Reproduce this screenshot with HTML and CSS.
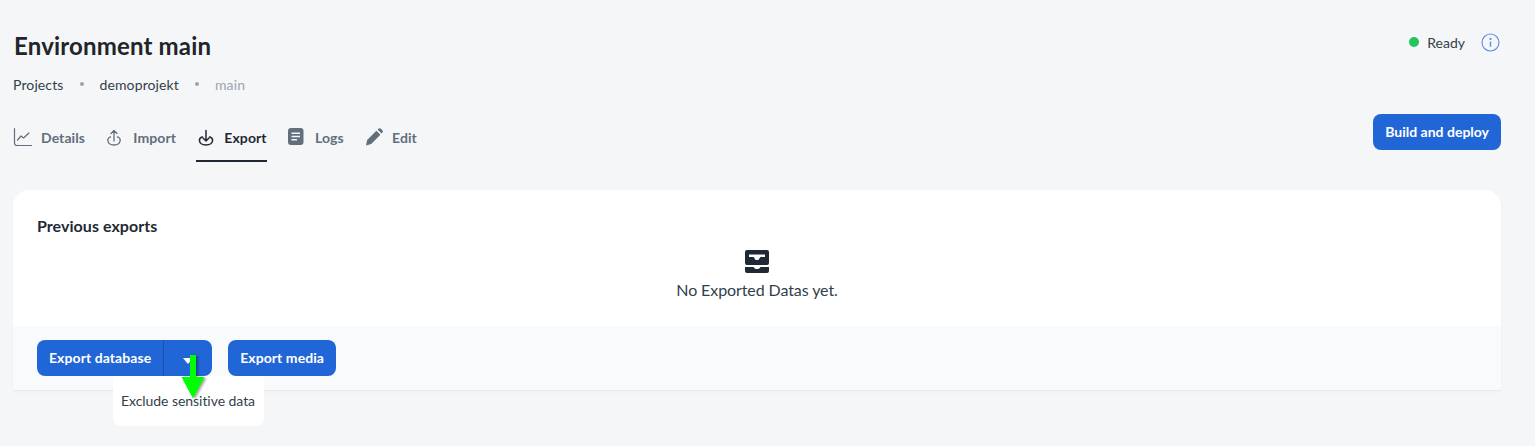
FILE: index.html
```html
<!DOCTYPE html>
<html lang="en">
<head>
  <meta charset="UTF-8">
  <title>Environment main</title>
  <link rel="stylesheet" href="styles.css">
</head>
<body>
  <div class="page-header">
    <div class="header-left">
      <h1>Environment main</h1>
      <div class="breadcrumbs">
        <a href="#">Projects</a>
        <span class="dot"></span>
        <a href="#">demoprojekt</a>
        <span class="dot"></span>
        <span class="current">main</span>
      </div>
      <nav class="tabs">
        <a href="#" class="tab">
          <svg class="tab-icon" viewBox="0 0 20 20" fill="none" stroke="currentColor" stroke-width="1.2" stroke-linecap="round" stroke-linejoin="round"><path d="M1.5 1.5V16Q1.5 18.5 4 18.5H18.5"/><path d="M4.5 13L8 9L10.5 11L16 6"/></svg>
          Details
        </a>
        <a href="#" class="tab">
          <svg class="tab-icon" viewBox="0 0 20 20" fill="none" stroke="currentColor" stroke-width="1.3" stroke-linecap="round" stroke-linejoin="round"><path d="M5.5 10H5Q2.6 11 2.8 13.5Q3.4 18 9 18Q14.6 18 15.2 13.5Q15.4 11 13 10H12.5"/><path d="M9 14V3.5M6 6.5L9 3.5L12 6.5"/></svg>
          Import
        </a>
        <a href="#" class="tab active">
          <svg class="tab-icon" viewBox="0 0 20 20" fill="none" stroke="currentColor" stroke-width="1.5" stroke-linecap="round" stroke-linejoin="round"><path d="M6.5 10H6Q3.3 11 3.4 13.5Q4 18 10 18Q16 18 16.6 13.5Q16.7 11 14 10H13.5"/><path d="M10 3.5V14M7 11L10 14L13 11"/></svg>
          Export
        </a>
        <a href="#" class="tab">
          <svg class="tab-icon" viewBox="0 0 20 20"><path fill="currentColor" fill-rule="evenodd" d="M4 1H13.5Q16.5 1 16.5 4V15Q16.5 18 13.5 18H4Q1 18 1 15V4Q1 1 4 1ZM4.5 5.5V7H13V5.5ZM4.5 8.8V10.3H13V8.8ZM4.5 12.1V13.6H10V12.1Z"/></svg>
          Logs
        </a>
        <a href="#" class="tab">
          <svg class="tab-icon" viewBox="0 0 20 20"><path fill="currentColor" d="M2 18.5L3.2 13L12.4 3.8L16.4 7.8L7.2 17ZM13.6 2.6L14.8 1.5Q15.7 .8 16.6 1.5L18.6 3.5Q19.3 4.4 18.6 5.3L17.5 6.6Z"/></svg>
          Edit
        </a>
      </nav>
    </div>
    <div class="header-right">
      <div class="status">
        <span class="status-dot"></span>
        <span>Ready</span>
        <svg class="info-icon" viewBox="0 0 20 20" fill="none" stroke="currentColor" stroke-width="1.2"><circle cx="10" cy="10" r="8.9"/><path d="M10 9V14.5" stroke-width="1.5"/><circle cx="10" cy="6.2" r=".6" fill="currentColor"/></svg>
      </div>
      <button class="btn btn-deploy">Build and deploy</button>
    </div>
  </div>

  <div class="card">
    <div class="card-body">
      <h2>Previous exports</h2>
      <div class="empty">
        <svg class="empty-icon" viewBox="0 0 24 24"><path fill="currentColor" fill-rule="evenodd" d="M2 0H22Q24 0 24 2V13Q24 15 22 15H2Q0 15 0 13V2Q0 0 2 0ZM4 4.5V7H8Q9 7 9.4 8L9.8 9Q10.2 10 11 10H13Q13.8 10 14.2 9L14.6 8Q15 7 16 7H20V4.5Z"/><path fill="currentColor" d="M0 17H8Q9 17 9.4 18Q9.8 19 11 19H13Q14.2 19 14.6 18Q15 17 16 17H24V21Q24 23 22 23H2Q0 23 0 21Z"/></svg>
        <p>No Exported Datas yet.</p>
      </div>
    </div>
    <div class="card-footer">
      <div class="btn-group">
        <button class="btn btn-main">Export database</button>
        <button class="btn btn-caret"><span class="caret"></span></button>
        <div class="dropdown">Exclude sensitive data</div>
        <svg class="arrow" viewBox="0 0 24 44"><path fill="#00ff00" d="M9 0H15V22H23.5L12 43.5L.5 22H9Z"/></svg>
      </div>
      <button class="btn">Export media</button>
    </div>
  </div>
</body>
</html>
```

FILE: styles.css
```css
* {
  box-sizing: border-box;
}
body {
  margin: 0;
  height: 446px;
  overflow: hidden;
  padding: 0 34px 0 13px;
  background-color: #f5f6f8;
  font-family: Lato, "Open Sans", sans-serif;
  color: #1f2933;
}
a {
  text-decoration: none;
  color: inherit;
}
.page-header {
  display: flex;
  justify-content: space-between;
  height: 190px;
}
h1 {
  margin: 0;
  padding: 31px 0 0 1px;
  font-size: 24px;
  line-height: 30px;
  font-weight: 700;
  letter-spacing: 0.17px;
  color: #212529;
}
.breadcrumbs {
  display: flex;
  align-items: center;
  margin-top: 14px;
  height: 18px;
  font-size: 14px;
  letter-spacing: 0.12px;
  color: #323f4b;
}
.dot {
  width: 4px;
  height: 4px;
  margin: 0 16px;
  border-radius: 50%;
  background-color: #9aa5b1;
}
.current {
  color: #9aa5b1;
}
.tabs {
  display: flex;
  gap: 20.4px;
  margin-top: 16px;
}
.tab {
  display: flex;
  align-items: center;
  gap: 8px;
  height: 53px;
  padding-top: 5px;
  font-size: 14px;
  font-weight: 700;
  letter-spacing: 0.07px;
  color: #616e7c;
  border-bottom: 2px solid transparent;
}
.tab.active {
  color: #1f2933;
  border-bottom-color: #1f2933;
}
.tab-icon {
  width: 20px;
  height: 20px;
  flex: none;
}
.header-right {
  display: flex;
  flex-direction: column;
  align-items: flex-end;
}
.status {
  display: flex;
  align-items: center;
  margin-top: 32px;
  height: 20px;
  font-size: 14px;
  color: #323f4b;
}
.status-dot {
  width: 10px;
  height: 10px;
  margin-right: 8px;
  border-radius: 50%;
  background-color: #22c55e;
}
.info-icon {
  width: 19px;
  height: 19px;
  margin-left: 16px;
  margin-right: 1px;
  color: #5f8fe0;
}
.btn {
  height: 36px;
  padding: 0 12px 2px;
  border: none;
  border-radius: 8px;
  background-color: #2166d6;
  color: #fff;
  font-family: inherit;
  font-size: 14px;
  font-weight: 700;
  letter-spacing: 0.07px;
}
.btn-deploy {
  margin-top: 62px;
  letter-spacing: 0;
}
.card {
  background-color: #fff;
  border-radius: 16px 16px 0 0;
  border-bottom: 1px solid #e9ebee;
  box-shadow: 0 1px 3px rgba(0,0,0,0.03);
  height: 201px;
}
.card-body {
  height: 136px;
  padding: 26px 24px 0;
}
h2 {
  margin: 0;
  font-size: 16px;
  line-height: 20px;
  font-weight: 700;
  letter-spacing: 0.05px;
  color: #1f2933;
}
.empty {
  display: flex;
  flex-direction: column;
  align-items: center;
  margin-top: 14px;
}
.empty-icon {
  width: 24px;
  height: 24px;
  color: #1f2933;
}
.empty p {
  margin: 6px 0 0;
  font-size: 16px;
  line-height: 20px;
  letter-spacing: -0.09px;
  color: #323f4b;
}
.card-footer {
  display: flex;
  gap: 16px;
  height: 64px;
  padding: 14px 24px;
  background-color: #f9fafb;
}
.btn-group {
  position: relative;
  display: flex;
}
.btn-main {
  border-radius: 8px 0 0 8px;
  border-right: 1px solid #1a52ab;
}
.btn-caret {
  width: 48px;
  padding: 0;
  border-radius: 0 8px 8px 0;
}
.caret {
  display: inline-block;
  margin-top: 4px;
  border-left: 5px solid transparent;
  border-right: 5px solid transparent;
  border-top: 6px solid #fff;
}
.dropdown {
  position: absolute;
  top: 36px;
  left: 76px;
  width: 151px;
  height: 50px;
  padding: 16px 0 0 8px;
  background-color: #fff;
  border-radius: 0 0 8px 8px;
  font-size: 14px;
  line-height: 18px;
  letter-spacing: -0.05px;
  color: #323f4b;
  white-space: nowrap;
}
.arrow {
  position: absolute;
  top: 15px;
  left: 144px;
  width: 24px;
  height: 44px;
  filter: drop-shadow(2px 1px 1px rgba(0,0,0,0.35));
}
```
